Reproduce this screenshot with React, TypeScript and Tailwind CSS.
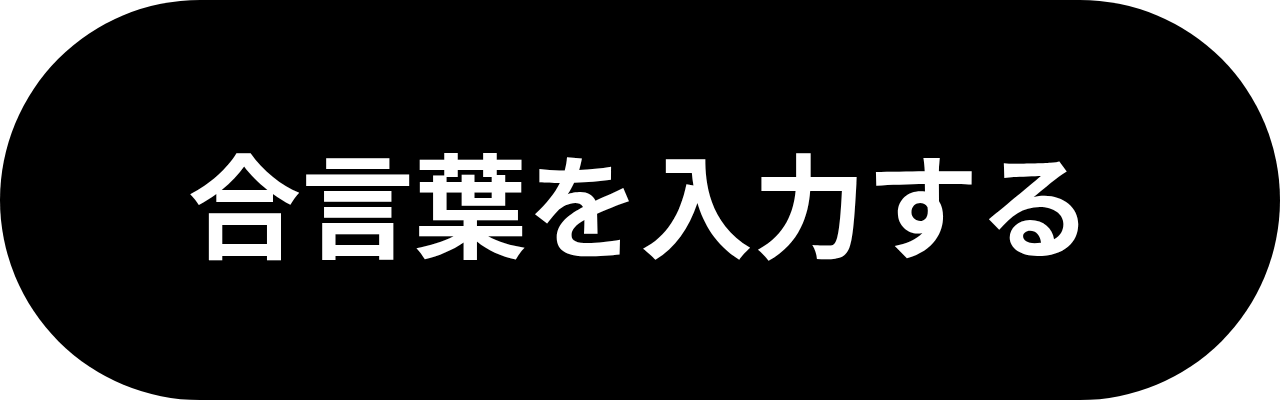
export default function App() {
  return (
    <div className="w-[1280px] h-[400px] bg-white">
      <button className="w-full h-full rounded-full bg-black flex items-center justify-center">
        <span
          className="text-white text-[113px] font-bold leading-none"
          style={{ fontFamily: '"Noto Sans CJK JP", sans-serif' }}
        >
          合言葉を入力する
        </span>
      </button>
    </div>
  );
}
